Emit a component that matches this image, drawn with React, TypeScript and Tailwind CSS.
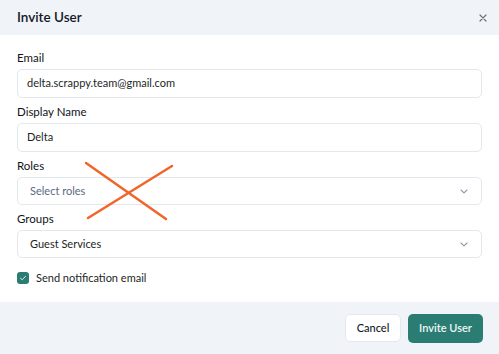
import React from "react";

function Chevron() {
  return (
    <svg width="8" height="5" viewBox="0 0 8 5" fill="none" className="shrink-0">
      <path d="M1 1 L4 3.8 L7 1" stroke="#8f98a8" strokeWidth="1.1" strokeLinecap="round" strokeLinejoin="round" />
    </svg>
  );
}

function Field({ label, children }: { label: string; children: React.ReactNode }) {
  return (
    <div className="flex flex-col">
      <label className="text-[11.5px] leading-4 font-normal text-[#111318] mb-[3px]">{label}</label>
      {children}
    </div>
  );
}

export default function App() {
  return (
    <div className="w-[499px] h-[354px] bg-white flex flex-col relative" style={{ fontFamily: "Lato, 'Noto Sans', sans-serif" }}>
      <div className="h-[35px] bg-[#f0f3f8] flex items-center justify-between pl-[17px] pr-[12px]">
        <span className="text-[13.5px] font-semibold text-[#111827]">Invite User</span>
        <svg width="8" height="8" viewBox="0 0 8 8">
          <path d="M1 1 L7 7 M7 1 L1 7" stroke="#6b7280" strokeWidth="1.2" strokeLinecap="round" />
        </svg>
      </div>
      <div className="flex-1 px-[17px] pt-[15px] flex flex-col gap-[6px]">
        <Field label="Email">
          <div className="h-[29px] border border-[#e3e8ef] rounded-[5px] flex items-center pl-[9px] text-[11px] text-[#1c1f26]">
            delta.scrappy.team@gmail.com
          </div>
        </Field>
        <Field label="Display Name">
          <div className="h-[29px] border border-[#e3e8ef] rounded-[5px] flex items-center pl-[9px] text-[11px] text-[#1c1f26]">
            Delta
          </div>
        </Field>
        <Field label="Roles">
          <div className="h-[28px] border border-[#e3e8ef] rounded-[5px] flex items-center justify-between pl-[12px] pr-[13px] text-[11px] text-[#5b6882]">
            <span>Select roles</span>
            <Chevron />
          </div>
        </Field>
        <Field label="Groups">
          <div className="h-[28px] border border-[#e3e8ef] rounded-[5px] flex items-center justify-between pl-[12px] pr-[13px] text-[11px] text-[#1c1f26]">
            <span>Guest Services</span>
            <Chevron />
          </div>
        </Field>
        <div className="flex items-center gap-[7px] mt-[6px]">
          <div className="w-[12px] h-[12px] rounded-[3px] bg-[#2b7d74] flex items-center justify-center">
            <svg width="8" height="8" viewBox="0 0 8 8">
              <path d="M1.5 4.2 L3.2 5.8 L6.5 2.3" stroke="#d9efe9" strokeWidth="1" fill="none" strokeLinecap="round" strokeLinejoin="round" />
            </svg>
          </div>
          <span className="text-[11px] text-[#1c1f26]">Send notification email</span>
        </div>
      </div>
      <div className="h-[52px] bg-[#f0f3f8] flex items-center justify-end gap-[7px] pr-[16px]">
        <button className="h-[28px] w-[56px] bg-white border border-[#e3e8ef] rounded-[5px] text-[11px] font-medium text-[#111827]">Cancel</button>
        <button className="h-[29px] w-[75px] bg-[#2b7d74] rounded-[5px] text-[11px] font-semibold text-[#eef7f5]">Invite User</button>
      </div>
      <svg className="absolute left-0 top-0 pointer-events-none" width="499" height="354">
        <line x1="86" y1="163" x2="166" y2="219" stroke="#f0652a" strokeWidth="2.5" strokeLinecap="round" />
        <line x1="172" y1="166" x2="88" y2="218" stroke="#f0652a" strokeWidth="2.5" strokeLinecap="round" />
      </svg>
    </div>
  );
}
